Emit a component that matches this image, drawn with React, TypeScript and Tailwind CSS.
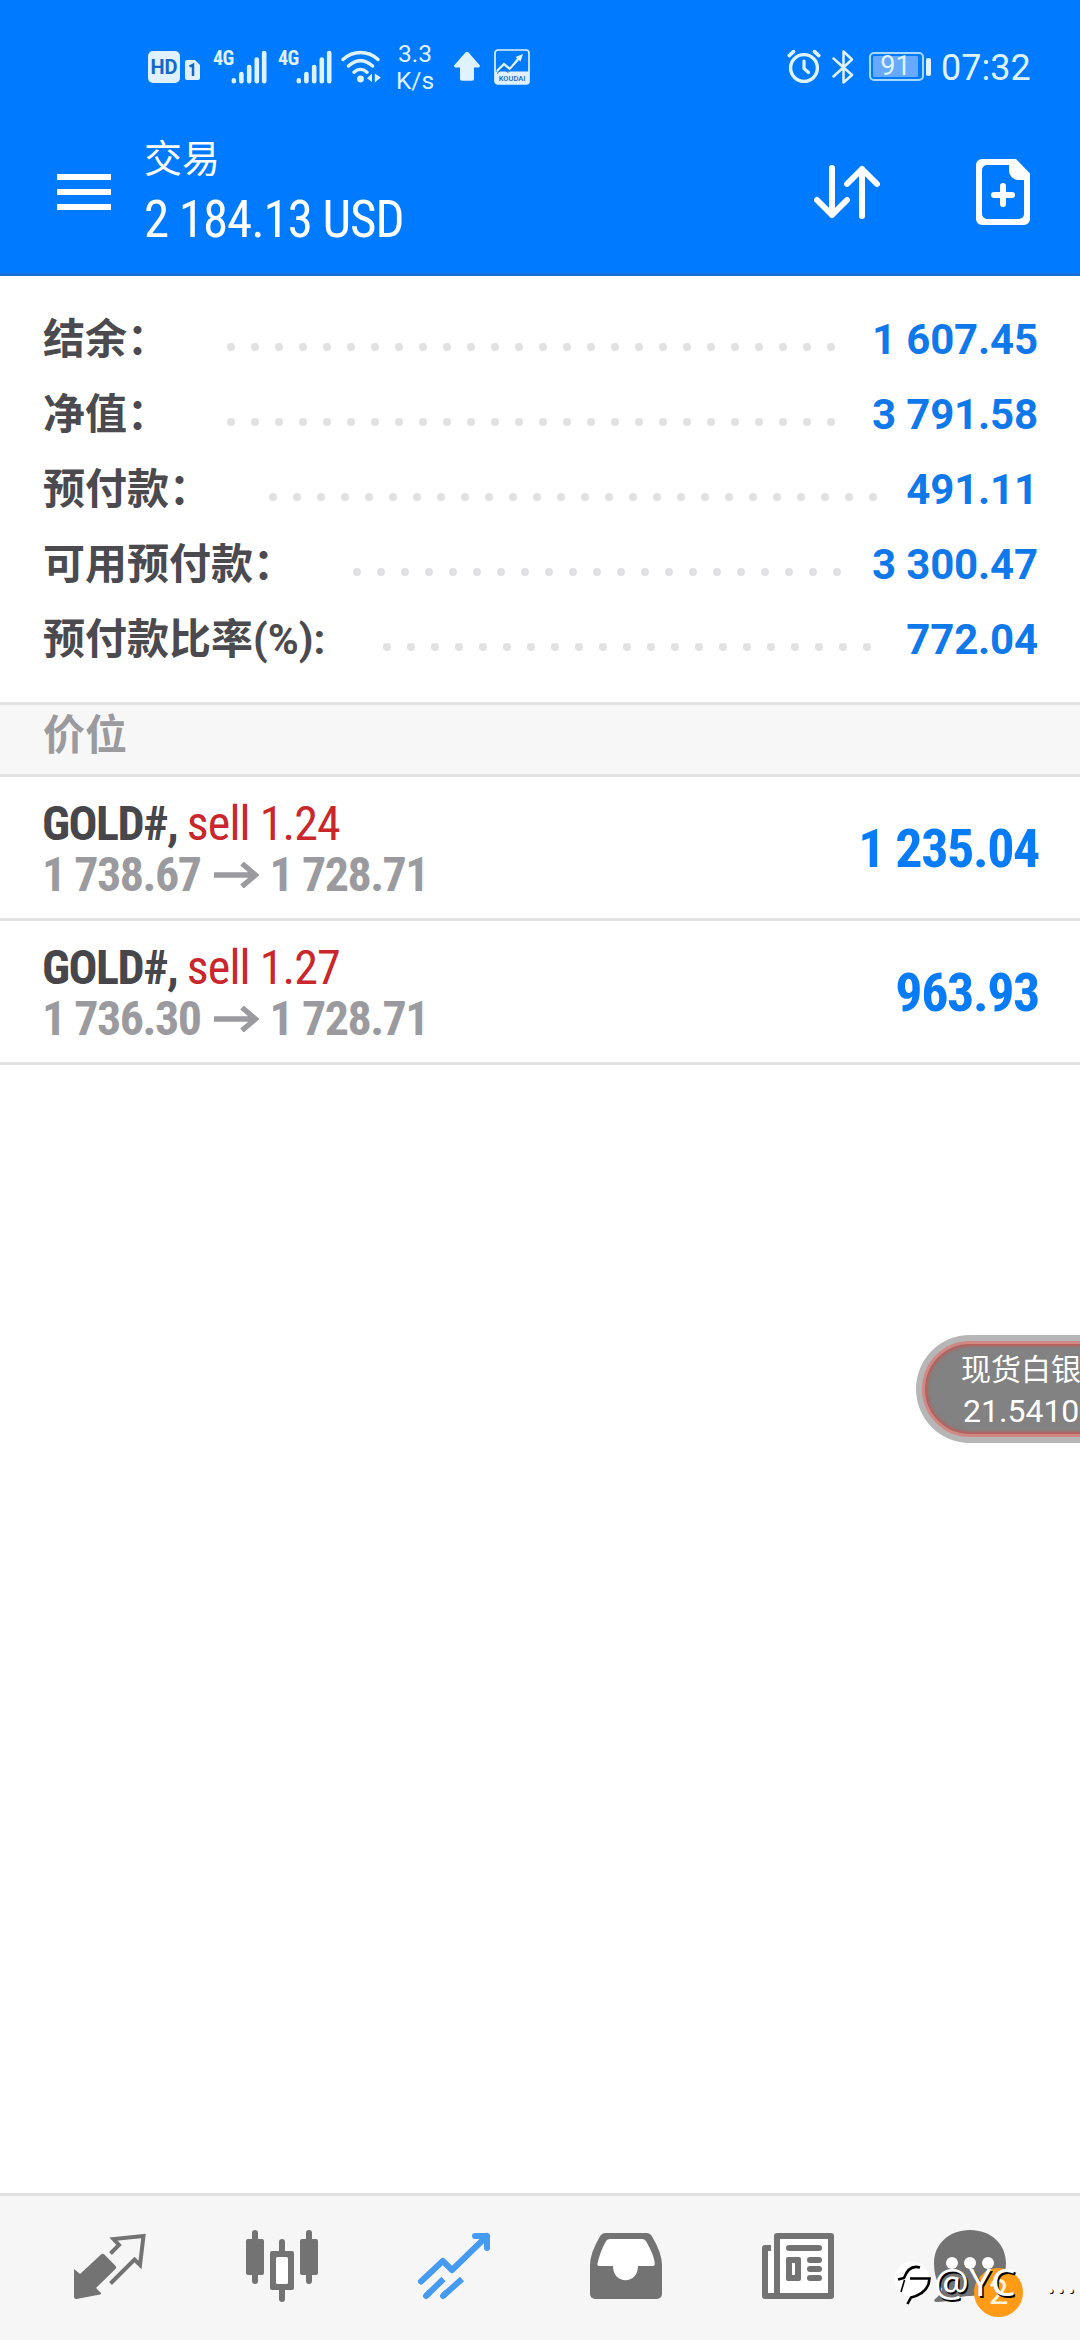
import type { ReactNode } from 'react';

const summary = [
  { label: '结余：', dots: 26, value: '1 607.45' },
  { label: '净值：', dots: 26, value: '3 791.58' },
  { label: '预付款：', dots: 26, value: '491.11' },
  { label: '可用预付款：', dots: 21, value: '3 300.47' },
  { label: '预付款比率(%):', dots: 21, value: '772.04' },
];

const positions = [
  { symbol: 'GOLD#,', side: 'sell 1.24', open: '1 738.67', current: '1 728.71', profit: '1 235.04' },
  { symbol: 'GOLD#,', side: 'sell 1.27', open: '1 736.30', current: '1 728.71', profit: '963.93' },
];

function Signal() {
  return (
    <div className="flex h-[34px]">
      <span className="w-[18px] text-[20px] leading-[16px] font-bold tracking-[-0.5px] [font-stretch:75%]">4G</span>
      <svg className="w-[36px] h-[34px]" viewBox="0 0 36 34" fill="none" stroke="currentColor" strokeWidth="4.6" strokeLinecap="round">
        <path d="M2.8 30.4v.8M10.4 24v7.2M18.2 17v14.2M25.8 9.5v21.7M33.2 3v28.2" />
      </svg>
    </div>
  );
}

function StatusBar() {
  return (
    <div className="h-[108px] pt-[25px] pl-[148px] pr-[51px] flex items-center text-[#dff3ff]">
      <div className="w-[32px] h-[32px] rounded-[5px] bg-[#dff0ff] text-[#1468c8] text-[20px] leading-[32px] font-bold text-center">HD</div>
      <svg className="w-[15px] h-[20px] ml-[5px] mt-[7px]" viewBox="0 0 15 20">
        <path d="M2 0h8l5 5v13a2 2 0 0 1-2 2H2a2 2 0 0 1-2-2V2a2 2 0 0 1 2-2z" fill="#dff0ff" />
        <path d="M4.5 6.500L8 4.800V16" fill="none" stroke="#1468c8" strokeWidth="2.5" />
      </svg>
      <div className="ml-[13px]"><Signal /></div>
      <div className="ml-[11px]"><Signal /></div>
      <svg className="w-[40px] h-[34px] ml-[9px]" viewBox="0 0 40 34" fill="none" stroke="currentColor" strokeWidth="3.4" strokeLinecap="round">
        <path d="M2 9.500C12 .2 27 .2 37 9.500M7.500 16C15 9 24 9 31.500 16M13 22.200c4-3.600 9-3.600 13 0" />
        <circle cx="19.5" cy="29" r="3.4" fill="currentColor" stroke="none" />
        <path d="M31 23.500v8.500l-5-3.700zM33.800 23.500v9l6-5z" fill="currentColor" stroke="none" />
      </svg>
      <div className="ml-[15px] w-[38px] text-[24.5px] leading-[27px] text-center">
        <div>3.3</div>
        <div>K/s</div>
      </div>
      <svg className="w-[26px] h-[29px] ml-[20px]" viewBox="0 0 26 29" fill="currentColor">
        <path d="M13 0c1 0 1.600.6 2.200 1.200L25.500 13c.8 1 .4 2.400-1 2.400H20V27a1.800 1.800 0 0 1-1.800 1.800H7.800A1.800 1.800 0 0 1 6 27V15.400H1.500c-1.400 0-1.800-1.400-1-2.400L10.800 1.200C11.400.6 12 0 13 0z" />
      </svg>
      <div className="relative ml-[14px] w-[36px] h-[36px]">
        <svg className="w-[36px] h-[36px]" viewBox="0 0 36 36" fill="none">
          <rect x="1" y="1" width="34" height="34" rx="3" stroke="#dff3ff" strokeWidth="1.7" />
          <path d="M1 22.500h34V32a3 3 0 0 1-3 3H4a3 3 0 0 1-3-3z" fill="#dff0ff" />
          <path d="M3 22l7-7 6 5L25 9" stroke="#dff3ff" strokeWidth="2.4" />
          <path d="M29 5l-2.500 7.500L21.500 8z" fill="#dff3ff" />
          <path d="M3 24.500l6-5.500 5 4.500 8-8" stroke="#1468c8" strokeWidth="1" />
        </svg>
        <span className="absolute left-0 bottom-[2px] w-full text-center text-[7.5px] leading-[9px] font-medium text-[#1468c8]">KOUDAI</span>
      </div>

      <svg className="w-[34px] h-[35px] ml-auto" viewBox="0 0 34 35" fill="none" stroke="currentColor" strokeLinecap="round">
        <circle cx="17" cy="19" r="13.4" strokeWidth="3.4" />
        <path d="M17 12v7.500l4.500 4" strokeWidth="3.2" strokeLinejoin="round" />
        <path d="M2.200 6.600l4.300-4M31.800 6.600l-4.300-4" strokeWidth="3.6" />
      </svg>
      <svg className="w-[22px] h-[36px] ml-[11px]" viewBox="0 0 22 36" fill="none" stroke="currentColor" strokeWidth="2.5" strokeLinejoin="round" strokeLinecap="round">
        <path d="M1.500 9.500L20 26 11.500 33.500V2.500L20 10.500 1.500 27.500" />
      </svg>
      <div className="ml-[15px] w-[55px] h-[29px] rounded-[5px] border-2 border-[#a9d8ff] p-[2px]">
        <div className="w-[45px] h-full bg-[#66a9ff] rounded-[1px] flex items-center justify-center text-[27px] leading-none">91</div>
      </div>
      <div className="ml-[2px] w-[5px] h-[18px] rounded-[2px] bg-[#dff3ff]" />
      <span className="ml-[10px] mt-[2px] w-[88px] text-[36px] leading-[42px] whitespace-nowrap">07:32</span>
    </div>
  );
}

function Toolbar() {
  return (
    <div className="h-[168px] pl-[57px] pr-[50px] flex items-center text-white border-b-[3px] border-[#1670dc]">
      <div className="flex flex-col gap-[9px] w-[54px] mt-[3px]">
        <span className="h-[6px] bg-white" />
        <span className="h-[6px] bg-white" />
        <span className="h-[6px] bg-white" />
      </div>
      <div className="ml-[33px] mt-[6px]">
        <div className="text-[38px] leading-[52px]">交易</div>
        <div className="text-[51px] leading-[69px] whitespace-nowrap tracking-[-1.05px] [font-stretch:75%]">2 184.13 USD</div>
      </div>
      <svg className="w-[66px] h-[54px] ml-auto mt-[3px]" viewBox="0 0 66 54" fill="none" stroke="currentColor" strokeWidth="6" strokeLinecap="round" strokeLinejoin="round">
        <path d="M18 3v47M3 35l15 15 15-15M48 51V4M33 19L48 4l15 15" />
      </svg>
      <svg className="w-[54px] h-[66px] ml-[96px] mt-[3px]" viewBox="0 0 54 66" fill="currentColor">
        <path fillRule="evenodd" d="M6 0h34l14 14.500V60a6 6 0 0 1-6 6H6a6 6 0 0 1-6-6V6a6 6 0 0 1 6-6zM11 6a5 5 0 0 0-5 5v44a5 5 0 0 0 5 5h32a5 5 0 0 0 5-5V21h-5.500A9.500 9.500 0 0 1 33 11.500V6z" />
        <path d="M27 27v18M18 36h18" stroke="currentColor" strokeWidth="6" strokeLinecap="round" />
      </svg>
    </div>
  );
}

function Dots({ count }: { count: number }) {
  return (
    <div className="ml-[58px] mt-[15px] flex gap-4">
      {Array.from({ length: count }, (_, i) => (
        <span key={i} className="size-2 rounded-full bg-[#e1e1e3]" />
      ))}
    </div>
  );
}

function NavIcon({ children, className = 'text-[#737373]' }: { children: ReactNode; className?: string }) {
  return (
    <div className={`flex-1 flex justify-center ${className}`}>
      <svg className="w-[72px] h-[72px] overflow-visible" viewBox="0 0 72 72" fill="currentColor">
        {children}
      </svg>
    </div>
  );
}

function BottomNav() {
  return (
    <nav className="h-[147px] pt-[34px] px-6 flex items-start bg-[#f6f6f6] border-t-[3px] border-[#e0e0e0]">
      <NavIcon>
        <path d="M0 39l6 5L27 24.500q1.700-1.700 3.400 0l11 11.200q1.500 1.600 0 3.200L22 58l5 5q.5 1.300-1 1.500L2.500 69Q0 69.300 0 66.500z" />
        <path d="M36.500 23.500L45 15l-5.500-6 30-3L66 35l-5.500-5.500-24 24" fill="none" stroke="currentColor" strokeWidth="4" />
      </NavIcon>
      <NavIcon>
        <path d="M9 3v48M63 3v48M36 12v57" stroke="currentColor" strokeWidth="6" strokeLinecap="round" />
        <rect x="0" y="9" width="18" height="36" rx="2" />
        <rect x="54" y="9" width="18" height="36" rx="2" />
        <rect x="24" y="21" width="24" height="39" rx="2" />
        <rect x="30" y="27" width="12" height="27" rx="1.5" fill="#fff" />
      </NavIcon>
      <NavIcon className="text-[#459af1]">
        <g fill="none" stroke="currentColor" strokeWidth="6" strokeLinejoin="round">
          <path d="M3 51.500L24.800 31 34 40 69 6M57 6h12v12M8 66l3-3M25 66l3-3" strokeLinecap="round" />
          <path d="M8 66l17.500-17M25 66l19-17" />
        </g>
      </NavIcon>
      <NavIcon>
        <path d="M15 3h42q3 0 4.500 2.500Q72 23 72 35v29a5 5 0 0 1-5 5H5a5 5 0 0 1-5-5V35Q0 23 10.500 5.500 12 3 15 3z" />
        <path d="M20 9h32q3 0 4.500 3Q64 25 64.800 33.500q.2 2.500-2 2.500H48c0 19-25 19-25 0H9q-2 0-1.500-2.500Q10 22 15.500 12 17 9 20 9z" fill="#fff" />
      </NavIcon>
      <NavIcon>
        <path d="M9 15H3a3 3 0 0 0-3 3v48a3 3 0 0 0 3 3h66a3 3 0 0 0 3-3V6a3 3 0 0 0-3-3H15a3 3 0 0 0-3 3v15H9z" />
        <path d="M18 9h48v54H18zM6 21h6v42H6z" fill="#fff" />
        <path d="M9 14v7h3v-7z" fill="#f6f6f6" />
        <rect x="24" y="15" width="36" height="6" rx="3" />
        <path fillRule="evenodd" d="M26 27h11a2 2 0 0 1 2 2v20a2 2 0 0 1-2 2H26a2 2 0 0 1-2-2V29a2 2 0 0 1 2-2zM30 33v12h3V33z" />
        <rect x="45" y="27" width="15" height="6" rx="3" />
        <rect x="45" y="36" width="15" height="6" rx="3" />
        <rect x="45" y="45" width="15" height="6" rx="3" />
      </NavIcon>
      <div className="flex-1 flex justify-center text-[#737373]">
        <div className="relative">
          <svg className="w-[72px] h-[72px]" viewBox="0 0 72 72" fill="currentColor">
            <path d="M36 0c21 0 36 14 36 33S57 66 36 66c-4 0-8 .5-11 1.500C18 70.500 9 72 2 72q-3-.5-1-3c4-3 6-6 7-10C3 53 0 44 0 33 0 14 15 0 36 0z" />
            <circle cx="18" cy="33" r="6" fill="#fff" />
            <circle cx="36" cy="33" r="6" fill="#fff" />
            <circle cx="54" cy="33" r="6" fill="#fff" />
          </svg>
          <span className="absolute left-[40px] top-[38px] size-[49px] rounded-full bg-[#ff9b16] text-[#fff6d8] text-[35px] leading-[49px] text-center">2</span>
          {/* author watermark */}
          <svg className="absolute left-[-42px] top-[29px] w-[40px] h-[48px]" viewBox="0 0 40 48" fill="none">
            <circle cx="20" cy="20" r="17.5" fill="#fff" />
            <path d="M6 20.500l6-1.500C15 11 20 6 28 8.500M18 19.500h19.500C37 31 29 36 19 38.500L15.500 45" stroke="#000" strokeWidth="2.6" />
            <path d="M9 33l3.500-12" stroke="#000" strokeWidth="1.6" />
          </svg>
          <span className="absolute left-0 top-[27px] text-[39px] leading-[48px] whitespace-nowrap text-white font-['Noto_Sans',sans-serif] tracking-[0.3px] [text-shadow:1.5px_1.5px_0_#000]">@YC</span>
          <span className="absolute left-[112px] top-[26px] text-[34px] leading-[48px] tracking-[1px] whitespace-nowrap text-white font-['Noto_Sans',sans-serif] [text-shadow:1px_1px_0_#000]">...</span>
        </div>
      </div>
    </nav>
  );
}

export default function App() {
  return (
    <div className="relative w-[1080px] h-[2340px] overflow-hidden bg-white flex flex-col font-['Roboto','Noto_Sans_CJK_SC',sans-serif]">
      <header className="bg-[#007aff]">
        <StatusBar />
        <Toolbar />
      </header>

      <section className="pt-[26px] pb-[25px] pl-[43px] pr-[42px]">
        {summary.map((row) => (
          <div key={row.label} className="h-[75px] flex items-center text-[42px] leading-[75px] font-bold whitespace-nowrap">
            <span className="text-[#4a4a4f]">{row.label}</span>
            <Dots count={row.dots} />
            <span className="ml-auto text-[#0f78ea] tracking-[-0.15px]">{row.value}</span>
          </div>
        ))}
      </section>

      <div className="h-[75px] pl-[43px] bg-[#f7f7f7] border-y-[3px] border-[#e2e2e2] text-[42px] leading-[61px] font-bold text-[#9b9b9f]">
        价位
      </div>

      {positions.map((p) => (
        <div key={p.side} className="h-[144px] pl-[42px] pr-[41px] flex items-center border-b-[3px] border-[#e2e2e2] whitespace-nowrap [font-stretch:75%]">
          <div className="pt-[3px] text-[48px] leading-[51px]">
            <div>
              <span className="font-bold text-[#46464b] tracking-[-1.5px]">{p.symbol} </span>
              <span className="text-[#c9272b] tracking-[-0.9px]">{p.side}</span>
            </div>
            <div className="flex items-center font-bold text-[#9b9b9f] tracking-[-1.5px]">
              <span>{p.open}</span>
              <svg className="w-[45px] h-[26px] ml-[13px] mr-[11px]" viewBox="0 0 45 26" fill="none" stroke="currentColor" strokeWidth="5.4">
                <path d="M0 13h42M28 1.500L41.500 13 28 24.500" />
              </svg>
              <span>{p.current}</span>
            </div>
          </div>
          <span className="ml-auto pt-[2px] text-[54px] leading-[60px] font-bold text-[#087cf8] tracking-[-1.4px]">{p.profit}</span>
        </div>
      ))}

      <div className="mt-auto">
        <BottomNav />
      </div>

      {/* floating quote */}
      <div className="absolute left-[916px] top-[1335px] w-[220px] h-[108px] rounded-full bg-[#b6b6b6] p-[6px]">
        <div className="h-full rounded-full bg-[#828282] border-[3px] border-[#d18783] pl-[36px] pt-[5px] text-white whitespace-nowrap shadow-[inset_0_0_3px_2px_#c05a56]">
          <div className="text-[30px] leading-[42px]">现货白银</div>
          <div className="text-[32px] leading-[40px] pl-[2px]">21.5410</div>
        </div>
      </div>
    </div>
  );
}
